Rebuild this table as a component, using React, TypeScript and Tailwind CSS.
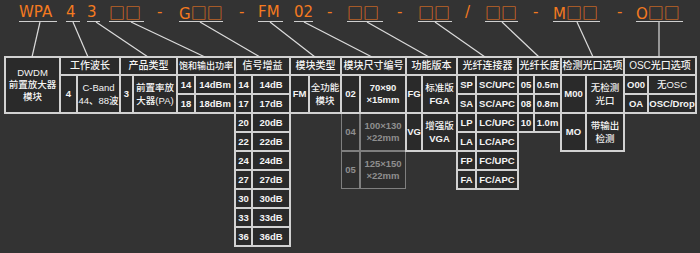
import React from "react";

const W =
  "flex items-center justify-center text-center whitespace-nowrap border border-[#d2d2d2] shadow-[0_0_0_1px_#d2d2d2] bg-[#2a2a2a] text-[#f4f4f4]";
const G =
  "flex items-center justify-center text-center whitespace-nowrap border border-[#7f7f7f] bg-[#2e2e2e] text-[#8e8e8e]";

function Cell({
  pos,
  grey,
  children,
  cls = "",
}: {
  pos: string;
  grey?: boolean;
  children?: React.ReactNode;
  cls?: string;
}) {
  return (
    <div className={`${grey ? G : W} ${pos} ${cls}`}>
      <div>{children}</div>
    </div>
  );
}

function Sq({ n }: { n: number }) {
  return (
    <span className="font-['Noto_Sans_CJK_SC',sans-serif] text-[16px]">
      {"□".repeat(n)}
    </span>
  );
}

const H = "text-[10px] leading-[12px] font-medium";
const T = "text-[9.5px] leading-[12px] font-bold";
const Z = "text-[9.5px] leading-[13px] font-medium";

export default function App() {
  return (
    <div className="relative w-[700px] h-[253px] overflow-hidden bg-[#333333] font-['Liberation_Sans','Noto_Sans_CJK_SC',sans-serif]">
      {/* code line */}
      <div className="flex pt-[3px] text-[15px] leading-[18px] text-[#f47a20] font-['DejaVu_Sans','Noto_Sans_CJK_SC',sans-serif] whitespace-nowrap">
        <span className="ml-[19px] w-[38px] h-[19px] border-b border-[#cfcfcf]">WPA</span>
        <span className="ml-[9px] w-[14px] h-[19px] border-b border-[#cfcfcf]">4</span>
        <span className="ml-[7px] w-[13px] h-[19px] border-b border-[#cfcfcf]">3</span>
        <span className="ml-[9px] w-[35px] h-[19px] border-b border-[#cfcfcf]"><Sq n={2} /></span>
        <span className="ml-[13px] w-[8px] h-[19px]">-</span>
        <span className="ml-[14px] w-[44px] h-[19px] border-b border-[#cfcfcf]">G<Sq n={2} /></span>
        <span className="ml-[16px] w-[7px] h-[19px]">-</span>
        <span className="ml-[12px] w-[25px] h-[19px] border-b border-[#cfcfcf]">FM</span>
        <span className="ml-[11px] w-[19px] h-[19px] border-b border-[#cfcfcf]">02</span>
        <span className="ml-[14px] w-[7px] h-[19px]">-</span>
        <span className="ml-[13px] w-[36px] h-[19px] border-b border-[#cfcfcf]"><Sq n={2} /></span>
        <span className="ml-[14px] w-[7px] h-[19px]">-</span>
        <span className="ml-[14px] w-[34px] h-[19px] border-b border-[#cfcfcf]"><Sq n={2} /></span>
        <span className="ml-[13px] w-[6px] h-[19px]">/</span>
        <span className="ml-[14px] w-[33px] h-[19px] border-b border-[#cfcfcf]"><Sq n={2} /></span>
        <span className="ml-[15px] w-[7px] h-[19px]">-</span>
        <span className="ml-[13px] w-[47px] h-[19px] border-b border-[#cfcfcf]">M<Sq n={2} /></span>
        <span className="ml-[17px] w-[7px] h-[19px]">-</span>
        <span className="ml-[12px] w-[47px] h-[19px] border-b border-[#cfcfcf]">O<Sq n={2} /></span>
      </div>

      {/* connector lines */}
      <svg className="absolute left-0 top-0 pointer-events-none" width="700" height="253" viewBox="0 0 700 253">
        <g stroke="#dcdcdc" strokeWidth="1.2" fill="none">
          <line x1="40" y1="22" x2="32" y2="57" />
          <line x1="73" y1="22" x2="88" y2="57" />
          <line x1="96" y1="22" x2="148" y2="57" />
          <line x1="131" y1="22" x2="205" y2="57" />
          <line x1="200" y1="22" x2="260" y2="57" />
          <line x1="270" y1="22" x2="315" y2="57" />
          <line x1="304" y1="22" x2="372" y2="57" />
          <line x1="367" y1="22" x2="429" y2="57" />
          <line x1="435" y1="22" x2="485" y2="57" />
          <line x1="502" y1="22" x2="539" y2="57" />
          <line x1="577" y1="22" x2="593" y2="57" />
          <line x1="659" y1="22" x2="659" y2="57" />
        </g>
      </svg>

      {/* table */}
      <div className="ml-[5px] mt-[35px] grid grid-cols-[55px_17px_43px_13px_44px_18px_40px_17px_38px_19px_32px_19px_46px_16px_35px_19px_42px_16px_27px_25px_38px_24px_48px] grid-rows-[18px_repeat(9,19px)]">
        {/* grey cells first so white borders paint over them */}
        <Cell grey pos="col-start-12 row-start-4 row-span-2" cls={T}>04</Cell>
        <Cell grey pos="col-start-13 row-start-4 row-span-2" cls={T}>100×130<br />×22mm</Cell>
        <Cell grey pos="col-start-12 row-start-6 row-span-2" cls={T}>05</Cell>
        <Cell grey pos="col-start-13 row-start-6 row-span-2" cls={T}>125×150<br />×22mm</Cell>

        <Cell pos="col-start-1 row-start-1 row-span-3" cls="text-[9.5px] leading-[12px] font-medium">DWDM<br />前置放大器<br />模块</Cell>

        <Cell pos="col-start-2 col-span-2 row-start-1" cls={H}>工作波长</Cell>
        <Cell pos="col-start-2 row-start-2 row-span-2" cls={T}>4</Cell>
        <Cell pos="col-start-3 row-start-2 row-span-2" cls={Z}>C-Band<br />44、88波</Cell>

        <Cell pos="col-start-4 col-span-2 row-start-1" cls={H}>产品类型</Cell>
        <Cell pos="col-start-4 row-start-2 row-span-2" cls={T}>3</Cell>
        <Cell pos="col-start-5 row-start-2 row-span-2" cls={Z}>前置率放<br />大器(PA)</Cell>

        <Cell pos="col-start-6 col-span-2 row-start-1" cls="text-[9px] leading-[12px] font-medium">饱和输出功率</Cell>
        <Cell pos="col-start-6 row-start-2" cls={T}>14</Cell>
        <Cell pos="col-start-7 row-start-2" cls={T}>14dBm</Cell>
        <Cell pos="col-start-6 row-start-3" cls={T}>18</Cell>
        <Cell pos="col-start-7 row-start-3" cls={T}>18dBm</Cell>

        <Cell pos="col-start-8 col-span-2 row-start-1" cls={H}>信号增益</Cell>
        <Cell pos="col-start-8 row-start-2" cls={T}>14</Cell>
        <Cell pos="col-start-9 row-start-2" cls={T}>14dB</Cell>
        <Cell pos="col-start-8 row-start-3" cls={T}>17</Cell>
        <Cell pos="col-start-9 row-start-3" cls={T}>17dB</Cell>
        <Cell pos="col-start-8 row-start-4" cls={T}>20</Cell>
        <Cell pos="col-start-9 row-start-4" cls={T}>20dB</Cell>
        <Cell pos="col-start-8 row-start-5" cls={T}>22</Cell>
        <Cell pos="col-start-9 row-start-5" cls={T}>22dB</Cell>
        <Cell pos="col-start-8 row-start-6" cls={T}>24</Cell>
        <Cell pos="col-start-9 row-start-6" cls={T}>24dB</Cell>
        <Cell pos="col-start-8 row-start-7" cls={T}>27</Cell>
        <Cell pos="col-start-9 row-start-7" cls={T}>27dB</Cell>
        <Cell pos="col-start-8 row-start-8" cls={T}>30</Cell>
        <Cell pos="col-start-9 row-start-8" cls={T}>30dB</Cell>
        <Cell pos="col-start-8 row-start-9" cls={T}>33</Cell>
        <Cell pos="col-start-9 row-start-9" cls={T}>33dB</Cell>
        <Cell pos="col-start-8 row-start-10" cls={T}>36</Cell>
        <Cell pos="col-start-9 row-start-10" cls={T}>36dB</Cell>

        <Cell pos="col-start-10 col-span-2 row-start-1" cls={H}>模块类型</Cell>
        <Cell pos="col-start-10 row-start-2 row-span-2" cls={T}>FM</Cell>
        <Cell pos="col-start-11 row-start-2 row-span-2" cls={Z}>全功能<br />模块</Cell>

        <Cell pos="col-start-12 col-span-2 row-start-1" cls={H}>模块尺寸编号</Cell>
        <Cell pos="col-start-12 row-start-2 row-span-2" cls={T}>02</Cell>
        <Cell pos="col-start-13 row-start-2 row-span-2" cls={T}>70×90<br />×15mm</Cell>

        <Cell pos="col-start-14 col-span-2 row-start-1" cls={H}>功能版本</Cell>
        <Cell pos="col-start-14 row-start-2 row-span-2" cls={T}>FG</Cell>
        <Cell pos="col-start-15 row-start-2 row-span-2" cls={Z}>标准版<br /><b>FGA</b></Cell>
        <Cell pos="col-start-14 row-start-4 row-span-2" cls={T}>VG</Cell>
        <Cell pos="col-start-15 row-start-4 row-span-2" cls={Z}>增强版<br /><b>VGA</b></Cell>

        <Cell pos="col-start-16 col-span-2 row-start-1" cls={H}>光纤连接器</Cell>
        <Cell pos="col-start-16 row-start-2" cls={T}>SP</Cell>
        <Cell pos="col-start-17 row-start-2" cls={T}>SC/UPC</Cell>
        <Cell pos="col-start-16 row-start-3" cls={T}>SA</Cell>
        <Cell pos="col-start-17 row-start-3" cls={T}>SC/APC</Cell>
        <Cell pos="col-start-16 row-start-4" cls={T}>LP</Cell>
        <Cell pos="col-start-17 row-start-4" cls={T}>LC/UPC</Cell>
        <Cell pos="col-start-16 row-start-5" cls={T}>LA</Cell>
        <Cell pos="col-start-17 row-start-5" cls={T}>LC/APC</Cell>
        <Cell pos="col-start-16 row-start-6" cls={T}>FP</Cell>
        <Cell pos="col-start-17 row-start-6" cls={T}>FC/UPC</Cell>
        <Cell pos="col-start-16 row-start-7" cls={T}>FA</Cell>
        <Cell pos="col-start-17 row-start-7" cls={T}>FC/APC</Cell>

        <Cell pos="col-start-18 col-span-2 row-start-1" cls={H}>光纤长度</Cell>
        <Cell pos="col-start-18 row-start-2" cls={T}>05</Cell>
        <Cell pos="col-start-19 row-start-2" cls={T}>0.5m</Cell>
        <Cell pos="col-start-18 row-start-3" cls={T}>08</Cell>
        <Cell pos="col-start-19 row-start-3" cls={T}>0.8m</Cell>
        <Cell pos="col-start-18 row-start-4" cls={T}>10</Cell>
        <Cell pos="col-start-19 row-start-4" cls={T}>1.0m</Cell>

        <Cell pos="col-start-20 col-span-2 row-start-1" cls={H}>检测光口选项</Cell>
        <Cell pos="col-start-20 row-start-2 row-span-2" cls={T}>M00</Cell>
        <Cell pos="col-start-21 row-start-2 row-span-2" cls={Z}>无检测<br />光口</Cell>
        <Cell pos="col-start-20 row-start-4 row-span-2" cls={T}>MO</Cell>
        <Cell pos="col-start-21 row-start-4 row-span-2" cls={Z}>带输出<br />检测</Cell>

        <Cell pos="col-start-22 col-span-2 row-start-1" cls={H}>OSC光口选项</Cell>
        <Cell pos="col-start-22 row-start-2" cls={T}>O00</Cell>
        <Cell pos="col-start-23 row-start-2" cls={Z}>无OSC</Cell>
        <Cell pos="col-start-22 row-start-3" cls={T}>OA</Cell>
        <Cell pos="col-start-23 row-start-3" cls={T}>OSC/Drop</Cell>
      </div>
    </div>
  );
}
